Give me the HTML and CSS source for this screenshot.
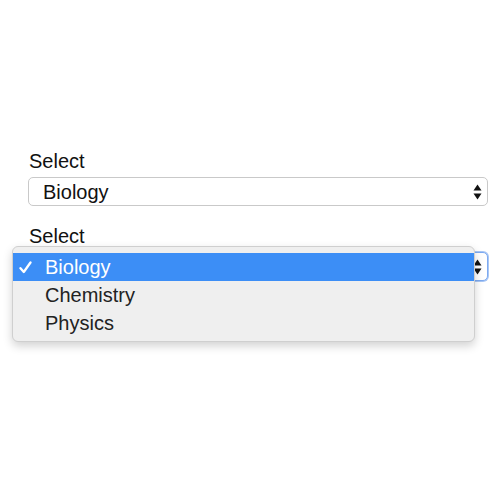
FILE: index.html
```html
<!DOCTYPE html>
<html>
<head>
<meta charset="utf-8">
<link rel="stylesheet" href="styles.css">
</head>
<body>
<div class="form">
  <div class="field">
    <div class="label">Select</div>
    <div class="select">
      <span class="value">Biology</span>
      <svg class="arrows" width="9" height="16" viewBox="0 0 9 16"><path d="M4.5 0.5 L8.5 6.5 L0.5 6.5 Z" fill="#111"/><path d="M4.5 15.5 L8.5 9.5 L0.5 9.5 Z" fill="#111"/></svg>
    </div>
  </div>
  <div class="field field-open">
    <div class="label">Select</div>
    <div class="select select-focus">
      <span class="value value-hidden">Biology</span>
      <svg class="arrows" width="9" height="16" viewBox="0 0 9 16"><path d="M4.5 0.5 L8.5 6.5 L0.5 6.5 Z" fill="#111"/><path d="M4.5 15.5 L8.5 9.5 L0.5 9.5 Z" fill="#111"/></svg>
      <div class="menu">
        <div class="option selected"><span class="check"><svg width="13" height="13" viewBox="0 0 13 13"><path d="M1.5 7.2 L4.8 11 L11.5 1.5" fill="none" stroke="#fff" stroke-width="2.3" stroke-linecap="round" stroke-linejoin="round"/></svg></span><span class="opt-text">Biology</span></div>
        <div class="option"><span class="check"></span><span class="opt-text">Chemistry</span></div>
        <div class="option"><span class="check"></span><span class="opt-text">Physics</span></div>
      </div>
    </div>
  </div>
</div>
</body>
</html>
```
FILE: styles.css
```css
html, body {
  margin: 0;
  padding: 0;
  background: #ffffff;
  min-height: 500px;
}
body {
  font-family: "Liberation Sans", Arial, sans-serif;
  color: #111;
}
.form {
  padding: 150px 12px 160px 28px;
  display: flex;
  flex-direction: column;
  gap: 19px;
}
.field {
  display: flex;
  flex-direction: column;
  gap: 5px;
}
.label {
  font-size: 20px;
  line-height: 22px;
  padding-left: 1px;
  color: #111;
}
.select {
  position: relative;
  height: 29px;
  box-sizing: border-box;
  border: 1px solid #c9c9c9;
  border-radius: 5px;
  background: #fff;
  display: flex;
  align-items: center;
  justify-content: space-between;
  padding: 0 5px 0 14px;
  font-size: 20px;
}
.select-focus {
  border-color: #7eaaf0;
  box-shadow: 0 0 0 1px #a9c7f5;
}
.value {
  line-height: 22px;
}
.value-hidden {
  visibility: hidden;
}
.arrows {
  display: block;
}
.menu {
  position: absolute;
  z-index: 10;
  left: -17px;
  top: -7px;
  width: 463px;
  height: 96px;
  box-sizing: border-box;
  background: #efefef;
  border: 1px solid #cfcfcf;
  border-radius: 6px;
  padding-top: 6px;
  box-shadow: 0 4px 10px rgba(0, 0, 0, 0.18);
  display: flex;
  flex-direction: column;
}
.option {
  height: 28px;
  flex: none;
  display: flex;
  align-items: center;
  font-size: 20px;
  color: #222;
}
.option.selected {
  background: #3c8ef6;
  color: #fff;
}
.check {
  width: 32px;
  padding-left: 6px;
  box-sizing: border-box;
  display: flex;
  align-items: center;
}
.check svg {
  display: block;
}
```
